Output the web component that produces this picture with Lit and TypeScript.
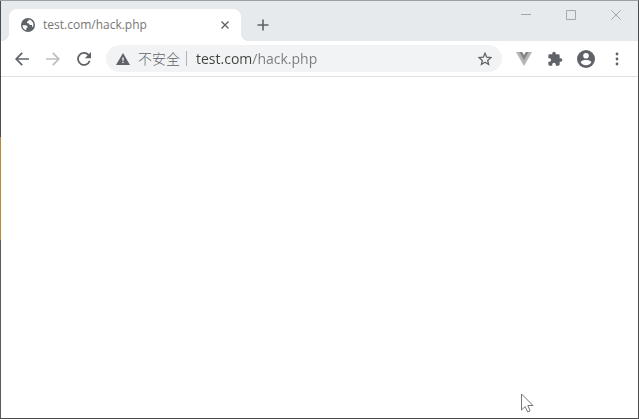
import { LitElement, html, css } from "lit";
import { customElement, state } from "lit/decorators.js";

@customElement("browser-tabs")
class BrowserTabs extends LitElement {
  static styles = css`
    :host {
      display: flex;
      align-items: flex-start;
      height: 40px;
      background: #e7eaed;
      font-family: "Open Sans", "Noto Sans", sans-serif;
    }
    button {
      display: grid;
      place-items: center;
      padding: 0;
      border: 0;
      background: none;
      color: #5f6368;
    }
    svg {
      display: block;
    }
    .tab {
      position: relative;
      box-sizing: border-box;
      display: flex;
      align-items: center;
      gap: 8px;
      flex: 0 1 232px;
      height: 32px;
      margin: 8px 0 0 8px;
      padding: 0 8px 0 12px;
      border-radius: 8px 8px 0 0;
      background: #fff;
    }
    .tab::before,
    .tab::after {
      content: "";
      position: absolute;
      bottom: 0;
      width: 8px;
      height: 8px;
    }
    .tab::before {
      right: 100%;
      background: radial-gradient(circle at 0 0, transparent 8px, #fff 8px);
    }
    .tab::after {
      left: 100%;
      background: radial-gradient(circle at 100% 0, transparent 8px, #fff 8px);
    }
    .title {
      flex: 1;
      font-size: 12px;
      line-height: 16px;
      color: #777773;
      white-space: nowrap;
    }
    .close {
      width: 16px;
      height: 16px;
    }
    .new {
      width: 28px;
      height: 28px;
      margin: 10px 0 0 8px;
    }
    .window {
      display: flex;
      margin-left: auto;
    }
    .window button {
      width: 45px;
      height: 28px;
      color: #a6a6a6;
    }
  `;

  render() {
    return html`
      <div class="tab" role="tab" aria-selected="true">
        <svg width="14" height="14" viewBox="0 0 14 14" aria-hidden="true">
          <circle cx="7" cy="7" r="7" fill="#5f6368" />
          <path
            d="M1.5 7.2H4.2Q6.7 7.4 6.6 9.2V9.7H5.3V12.3Q1.5 11.1 1.5 7.2ZM7.6 1.6V2.5Q7.5 3.6 6 3.7V5Q8.6 5 8.8 7H11V8.7H12.1Q12.8 6.6 12.1 4.8Q10.8 2 7.6 1.6Z"
            fill="#fff"
          />
        </svg>
        <span class="title">test.com/hack.php</span>
        <button class="close" aria-label="关闭标签页">
          <svg width="8" height="8" viewBox="0 0 8 8" fill="none" stroke="currentColor" stroke-width="1.4">
            <path d="M.5.5l7 7M7.5.5l-7 7" />
          </svg>
        </button>
      </div>
      <button class="new" aria-label="新标签页">
        <svg width="12" height="12" viewBox="0 0 12 12" fill="none" stroke="currentColor" stroke-width="1.6">
          <path d="M6 .5v11M.5 6h11" />
        </svg>
      </button>
      <div class="window">
        <button aria-label="最小化">
          <svg width="10" height="10" viewBox="0 0 10 10" fill="none" stroke="currentColor">
            <path d="M0 4.5h10" />
          </svg>
        </button>
        <button aria-label="最大化">
          <svg width="10" height="10" viewBox="0 0 10 10" fill="none" stroke="currentColor">
            <path d="M.5.5h9v9h-9z" />
          </svg>
        </button>
        <button aria-label="关闭">
          <svg width="10" height="10" viewBox="0 0 10 10" fill="none" stroke="currentColor">
            <path d="M.3.3l9.4 9.4M9.7.3L.3 9.7" />
          </svg>
        </button>
      </div>
    `;
  }
}

@customElement("browser-toolbar")
class BrowserToolbar extends LitElement {
  static styles = css`
    :host {
      box-sizing: border-box;
      display: flex;
      align-items: center;
      height: 36px;
      padding: 0 6px 0 5px;
      border-bottom: 1px solid #dfe2e5;
      background: #fff;
      font-family: "Open Sans", "Noto Sans", "Noto Sans CJK SC", sans-serif;
    }
    button {
      display: grid;
      place-items: center;
      flex: none;
      width: 31px;
      height: 28px;
      padding: 0;
      border: 0;
      background: none;
      color: #5f6368;
    }
    button:disabled {
      color: #bcbec0;
    }
    svg {
      display: block;
    }
    .omnibox {
      box-sizing: border-box;
      display: flex;
      align-items: center;
      flex: 1;
      min-width: 0;
      height: 27px;
      margin: 0 6px 0 7px;
      padding: 0 2px 0 10px;
      border-radius: 14px;
      background: #f1f3f4;
    }
    .omnibox button.security {
      display: flex;
      align-items: center;
      gap: 8px;
      width: auto;
      height: 26px;
      font: 300 14px/20px "Noto Sans CJK SC", sans-serif;
      color: #5f6368;
    }
    .security span {
      padding-bottom: 2px;
    }
    .rule {
      width: 1px;
      height: 15px;
      margin: 0 9px 0 6px;
      background: #b0b3b6;
    }
    .url {
      flex: 1;
      min-width: 0;
      height: 20px;
      padding: 0;
      border: 0;
      outline: 0;
      font: 14px/20px "Open Sans", "Noto Sans", sans-serif;
      color: transparent;
      caret-color: #333;
      background: linear-gradient(90deg, #40413f 56px, #787b7c 56px);
      -webkit-background-clip: text;
      background-clip: text;
    }
    .actions {
      display: flex;
    }
  `;

  @state() private url = "test.com/hack.php";

  render() {
    return html`
      <button aria-label="后退">
        <svg width="14" height="14" viewBox="0 0 14 14" fill="none" stroke="currentColor" stroke-width="1.7">
          <path d="M14 7H1.3M7.2.8L1.2 7l6 6.2" />
        </svg>
      </button>
      <button aria-label="前进" disabled>
        <svg width="14" height="14" viewBox="0 0 14 14" fill="none" stroke="currentColor" stroke-width="1.7">
          <path d="M0 7h12.7M6.8.8l6 6.2-6 6.2" />
        </svg>
      </button>
      <button aria-label="重新加载">
        <svg width="14" height="14" viewBox="0 0 14 14">
          <path
            d="M12.7 8.8A6 6 0 1 1 11.4 2.8L13 4.4"
            fill="none"
            stroke="currentColor"
            stroke-width="1.8"
          />
          <path d="M14 0v6.2H7.8z" fill="currentColor" />
        </svg>
      </button>
      <div class="omnibox">
        <button class="security">
          <svg width="14" height="12" viewBox="0 0 14 12" aria-hidden="true">
            <path d="M7 0l7 12H0z" fill="#5f6368" />
            <path d="M6.3 4.5h1.4v3.2H6.3zM6.3 8.7h1.4v1.4H6.3z" fill="#f1f3f4" />
          </svg>
          <span>不安全</span>
        </button>
        <span class="rule"></span>
        <input class="url" type="text" aria-label="地址" spellcheck="false" .value=${this.url} />
        <button aria-label="收藏">
          <svg width="14" height="14" viewBox="0 0 14 14" fill="none" stroke="currentColor" stroke-width="1.3">
            <path d="M7 1.3l1.7 3.9 4.2.4-3.2 2.8.9 4.1L7 10.3l-3.6 2.2.9-4.1L1.1 5.600l4.2-.4z" />
          </svg>
        </button>
      </div>
      <div class="actions">
        <button aria-label="Vue">
          <svg width="16" height="14" viewBox="0 0 16 14">
            <path d="M0 0h3.400L8 7.800 12.600 0H16L8 14z" fill="#b5b5b5" />
            <path d="M3.200 0h3L8 3.100 9.800 0h3L8 8.300z" fill="#858585" />
          </svg>
        </button>
        <button aria-label="扩展程序">
          <svg width="16" height="16" viewBox="0 0 24 24">
            <path
              d="M20.500 11H19V7a2 2 0 0 0-2-2h-4V3.500a2.500 2.500 0 0 0-5 0V5H4a2 2 0 0 0-2 2v3.800h1.500a2.700 2.700 0 0 1 0 5.400H2V20a2 2 0 0 0 2 2h3.800v-1.500a2.700 2.700 0 0 1 5.400 0V22H17a2 2 0 0 0 2-2v-4h1.500a2.500 2.500 0 0 0 0-5z"
              fill="currentColor"
            />
          </svg>
        </button>
        <button aria-label="用户">
          <svg width="18" height="18" viewBox="0 0 18 18">
            <circle cx="9" cy="9" r="9" fill="currentColor" />
            <circle cx="9" cy="5.700" r="2.800" fill="#fff" />
            <path d="M3.600 12.200C4 10.600 7 10 9 10s5 .6 5.400 2.200Q12.500 15.200 9 15.200T3.600 12.200z" fill="#fff" />
          </svg>
        </button>
        <button aria-label="菜单">
          <svg width="4" height="14" viewBox="0 0 4 14" fill="currentColor">
            <circle cx="2" cy="2" r="1.400" />
            <circle cx="2" cy="7" r="1.400" />
            <circle cx="2" cy="12" r="1.400" />
          </svg>
        </button>
      </div>
    `;
  }
}

@customElement("app-root")
class AppRoot extends LitElement {
  static styles = css`
    :host {
      box-sizing: border-box;
      position: relative;
      display: grid;
      grid-template-columns: 1px minmax(0, 1fr);
      min-height: 100vh;
      border: solid #4b4b4f;
      border-width: 1px 1px 1px 0;
      border-top-color: #9c9fa3;
      background: #fff;
    }
    .edge {
      background: linear-gradient(#4b4b52 136px, #b98a35 136px, #b98a35 239px, #5c5c60 239px);
    }
    .pointer {
      position: absolute;
      right: 104px;
      bottom: 5px;
      display: block;
    }
  `;

  render() {
    return html`
      <div class="edge"></div>
      <div>
        <browser-tabs></browser-tabs>
        <browser-toolbar></browser-toolbar>
        <main></main>
      </div>
      <svg class="pointer" width="13" height="20" viewBox="0 0 13 20" aria-hidden="true">
        <path
          d="M.5 1v16l3.700-3.500L6.700 19l2.400-1.100L6.800 12.500H12z"
          fill="#fff"
          stroke="#66666e"
          stroke-width=".9"
        />
      </svg>
    `;
  }
}
